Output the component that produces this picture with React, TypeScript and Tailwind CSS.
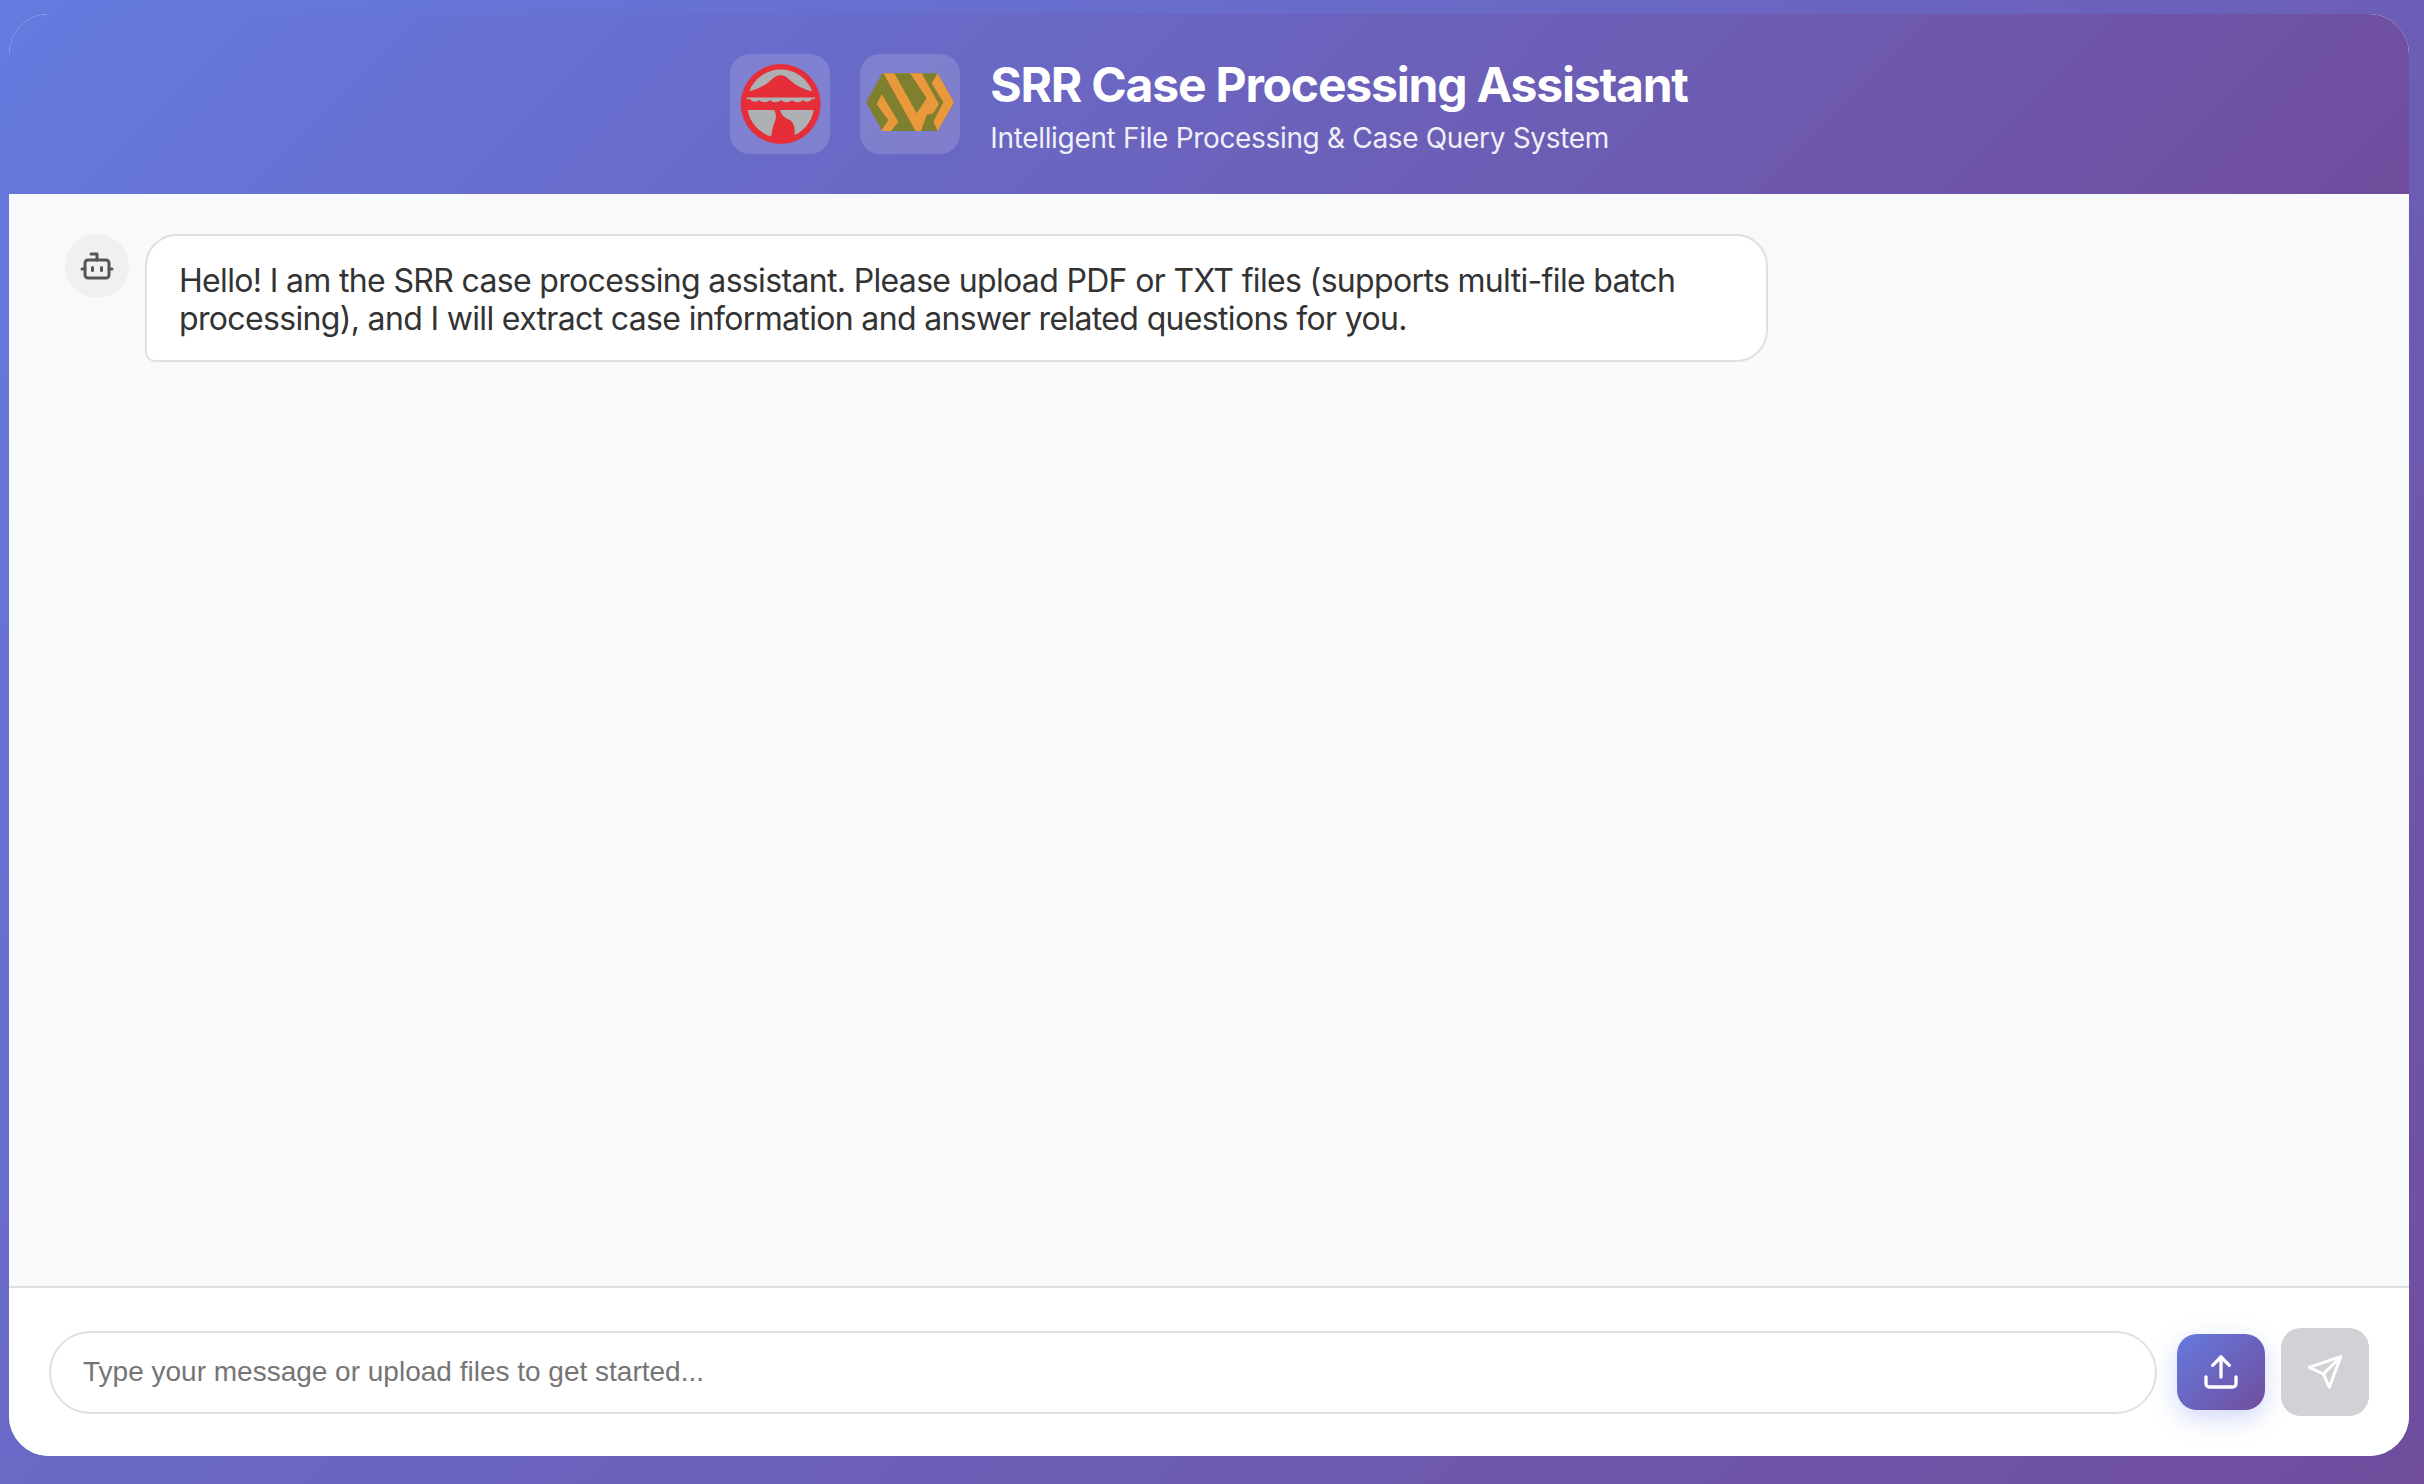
import { Bot, Upload } from "lucide-react";

const LingnanLogo = () => (
  <svg viewBox="0 0 90 90" className="w-[90px] h-[90px]">
    <circle cx="45.7" cy="45" r="40" fill="#e52e38" />
    <path d="M14.2 32.3 A33.7 33.7 0 0 1 77.2 32.3 C68 30 62 27 56 22 C52 18 49 16 45.7 16 C42 16 39 18 35 22 C29 27 23 30 14.2 32.3 Z" fill="#adb1b3" />
    <path d="M11.5 38.5 H80 V40 H77 C75 43 71 44 68 41 C65 44 60 44 57 41 C54 44 49 44 46 41 C43 44 38 44 35 41 C32 44 27 44 24 41 C21 44 17 43 15 40 H11.5 Z" fill="#adb1b3" />
    <path d="M12.7 51 H39.3 C42 57 41 60 39 65 C37 70 37 74 36 77.5 A33.7 33.7 0 0 1 12.7 51 Z" fill="#adb1b3" />
    <path d="M45 51 H78.7 A33.7 33.7 0 0 1 59.5 76 C60.5 70 59 64 55 61 C50 59 47 57 45 51 Z" fill="#adb1b3" />
  </svg>
);

const WaveLogo = () => (
  <svg viewBox="0 -33 270 300" className="w-[90px] h-[100px]">
    <polygon points="3,112 52,25 218,25 267,112 218,198 52,198" fill="#7f7f30" />
    {/* main W band, olive stripe laid over it */}
    <polygon points="55,25 170,25 222,118 205,145 185,150 168,198 152,198" fill="#e9993b" />
    <polygon points="88,25 135,25 185,100 155,145" fill="#7f7f30" />
    {/* left chevron */}
    <polygon points="50,87 100,170 78,198 48,198 70,165 35,118" fill="#e9993b" />
    {/* right chevron */}
    <polygon points="218,25 267,112 218,198 205,170 235,112 200,55" fill="#e9993b" />
  </svg>
);

const App = () => {
  return (
    <div className="h-screen w-full pt-[14px] pb-[28px] pl-[9px] pr-[15px] bg-[linear-gradient(135deg,#657adf_0%,#704d9d_100%)] font-['Inter',sans-serif]">
      <div className="h-full flex flex-col bg-white rounded-[40px] overflow-hidden">
        <div className="h-[180px] shrink-0 flex items-center justify-center gap-[30px] bg-[linear-gradient(135deg,#657adf_0%,#704d9d_100%)] text-white">
          <div className="w-[100px] h-[100px] rounded-[20px] bg-white/15 flex items-center justify-center">
            <LingnanLogo />
          </div>
          <div className="w-[100px] h-[100px] rounded-[20px] bg-white/15 flex items-center justify-center">
            <WaveLogo />
          </div>
          <div className="pt-[2px]">
            <h1 className="text-[48px] leading-[58px] font-bold tracking-[-1.2px]">SRR Case Processing Assistant</h1>
            <p className="text-[28px] leading-[34px] mt-[7px] opacity-90 tracking-[-0.33px]">Intelligent File Processing &amp; Case Query System</p>
          </div>
        </div>
        <div className="flex-1 bg-[#f8f9fa] px-[56px] py-[40px]">
          <div className="flex items-start gap-[17px]">
            <div className="w-[64px] h-[64px] rounded-full bg-[#f0f0f0] flex items-center justify-center text-[#555555]">
              <Bot size={36} />
            </div>
            <div className="w-[1623px] -ml-[1px] rounded-[32px] rounded-bl-[10px] border-2 border-[#e0e0e0] bg-white px-[32px] pt-[26px] pb-[22px] text-[32px] leading-[38px] tracking-[-0.66px] text-[#333333]">
              Hello! I am the SRR case processing assistant. Please upload PDF or TXT files (supports multi-file batch processing), and I will extract case information and answer related questions for you.
            </div>
          </div>
        </div>
        <div className="h-[170px] shrink-0 flex items-center gap-[16px] border-t-2 border-[#e0e0e0] pl-[40px] pr-[40px] bg-white">
          <input
            placeholder="Type your message or upload files to get started..."
            className="flex-1 h-[83px] rounded-[42px] border-2 border-[#e0e0e0] px-[32px] text-[28px] font-['Liberation_Sans',sans-serif] placeholder:text-[#757575] outline-none"
          />
          <button className="w-[88px] h-[76px] ml-[4px] rounded-[20px] flex items-center justify-center text-white bg-[linear-gradient(135deg,#657adf_0%,#704d9d_100%)] shadow-[0_8px_24px_rgba(102,126,234,0.3)]">
            <Upload size={40} />
          </button>
          <button className="w-[88px] h-[88px] rounded-[20px] flex items-center justify-center text-white bg-[#d1d2d6]">
            <svg viewBox="0 0 40 40" className="w-[40px] h-[40px]" fill="none" stroke="currentColor" strokeWidth="3" strokeLinejoin="round" strokeLinecap="round">
              <path d="M35.7 4.7 L4.3 15.3 L18.3 22 L24.3 35.3 Z" />
              <path d="M35.7 4.7 L18.3 22" />
            </svg>
          </button>
        </div>
      </div>
    </div>
  );
};

export default App;
